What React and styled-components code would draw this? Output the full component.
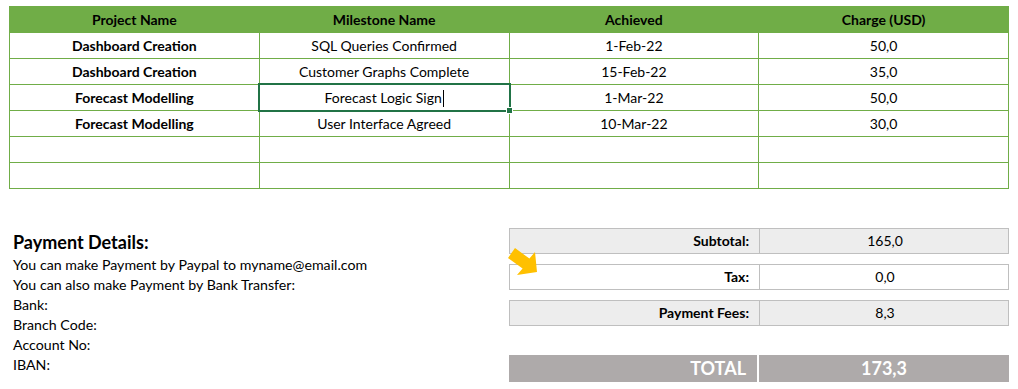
import React from "react";
import styled, { createGlobalStyle } from "styled-components";

const GlobalStyle = createGlobalStyle`
  body {
    margin: 0;
    background: #ffffff;
    font-family: Lato, "Liberation Sans", sans-serif;
    color: #000000;
  }
`;

const Sheet = styled.div`
  width: 1018px;
  height: 389px;
  padding: 6px 0 0 9px;
  box-sizing: border-box;
  overflow: hidden;
  position: relative;
`;

const Grid = styled.table`
  border-collapse: collapse;
  table-layout: fixed;
  width: 1000px;
  font-size: 14px;
`;

const HeadCell = styled.th`
  background: #70ad47;
  border: 1px solid #70ad47;
  height: 25px;
  padding: 0;
  font-weight: 700;
  text-align: center;
`;

const Cell = styled.td`
  border: 1px solid #70ad47;
  height: 25px;
  padding: 0;
  text-align: center;
  font-weight: ${(p) => (p.bold ? 700 : 400)};
  position: relative;
`;

const ActiveFrame = styled.span`
  position: absolute;
  left: -2px;
  top: -2px;
  right: -2px;
  bottom: -2px;
  border: 2px solid #217346;
  pointer-events: none;

  &::after {
    content: "";
    position: absolute;
    right: -4px;
    bottom: -4px;
    width: 5px;
    height: 5px;
    background: #217346;
    border: 1px solid #ffffff;
  }
`;

const Caret = styled.span`
  display: inline-block;
  width: 1px;
  height: 17px;
  background: #000000;
  vertical-align: -4px;
  margin-left: 1px;
`;

const Bottom = styled.div`
  display: flex;
  margin-top: 39px;
`;

const Payment = styled.div`
  width: 500px;
  padding: 2px 0 0 4px;
  box-sizing: border-box;
`;

const PaymentTitle = styled.div`
  font-size: 18px;
  font-weight: 700;
  line-height: 24px;
  margin-bottom: 1px;
`;

const PaymentLine = styled.div`
  font-size: 14.2px;
  line-height: 20px;
`;

const Summary = styled.div`
  width: 500px;
  display: flex;
  flex-direction: column;
  gap: 10px;
`;

const SummaryRow = styled.div`
  display: grid;
  grid-template-columns: 250px 250px;
  height: 26px;
  box-sizing: border-box;
  border: 1px solid #bfbfbf;
  background: ${(p) => (p.shaded ? "#ededed" : "#ffffff")};
  font-size: 14px;
`;

const SummaryLabel = styled.div`
  font-weight: 700;
  text-align: right;
  padding-right: 10px;
  line-height: 24px;
  border-right: 1px solid #bfbfbf;
`;

const SummaryValue = styled.div`
  text-align: center;
  line-height: 24px;
`;

const TotalRow = styled.div`
  display: grid;
  grid-template-columns: 250px 250px;
  height: 27px;
  margin-top: 19px;
  background: #aeaaaa;
  color: #ffffff;
  font-weight: 700;
  font-size: 18px;
  line-height: 27px;
`;

const TotalLabel = styled.div`
  text-align: right;
  padding-right: 11px;
  border-right: 2px solid #ffffff;
`;

const TotalValue = styled.div`
  text-align: center;
`;

const Pointer = styled.svg`
  position: absolute;
  left: 505px;
  top: 246px;
`;

const milestones = [
  { project: "Dashboard Creation", name: "SQL Queries Confirmed", date: "1-Feb-22", charge: "50,0" },
  { project: "Dashboard Creation", name: "Customer Graphs Complete", date: "15-Feb-22", charge: "35,0" },
  { project: "Forecast Modelling", name: "Forecast Logic Sign", date: "1-Mar-22", charge: "50,0", editing: true },
  { project: "Forecast Modelling", name: "User Interface Agreed", date: "10-Mar-22", charge: "30,0" },
  { project: "", name: "", date: "", charge: "" },
  { project: "", name: "", date: "", charge: "" },
];

const paymentLines = [
  "You can make Payment by Paypal to myname@email.com",
  "You can also make Payment by Bank Transfer:",
  "Bank:",
  "Branch Code:",
  "Account No:",
  "IBAN:",
];

const totals = [
  { label: "Subtotal:", value: "165,0", shaded: true },
  { label: "Tax:", value: "0,0" },
  { label: "Payment Fees:", value: "8,3", shaded: true },
];

export default function App() {
  return (
    <>
      <GlobalStyle />
      <Sheet>
        <Grid>
          <thead>
            <tr>
              <HeadCell>Project Name</HeadCell>
              <HeadCell>Milestone Name</HeadCell>
              <HeadCell>Achieved</HeadCell>
              <HeadCell>Charge (USD)</HeadCell>
            </tr>
          </thead>
          <tbody>
            {milestones.map((m, i) => (
              <tr key={i}>
                <Cell bold>{m.project}</Cell>
                <Cell>
                  {m.name}
                  {m.editing && <Caret />}
                  {m.editing && <ActiveFrame />}
                </Cell>
                <Cell>{m.date}</Cell>
                <Cell>{m.charge}</Cell>
              </tr>
            ))}
          </tbody>
        </Grid>

        <Bottom>
          <Payment>
            <PaymentTitle>Payment Details:</PaymentTitle>
            {paymentLines.map((line) => (
              <PaymentLine key={line}>{line}</PaymentLine>
            ))}
          </Payment>
          <Summary>
            {totals.map((t) => (
              <SummaryRow key={t.label} shaded={t.shaded}>
                <SummaryLabel>{t.label}</SummaryLabel>
                <SummaryValue>{t.value}</SummaryValue>
              </SummaryRow>
            ))}
            <TotalRow>
              <TotalLabel>TOTAL</TotalLabel>
              <TotalValue>173,3</TotalValue>
            </TotalRow>
          </Summary>
        </Bottom>

        <Pointer width="36" height="32" viewBox="0 0 36 32">
          <polygon
            points="10,2 24.4,12.6 30,6 32,26 12,29 17.6,22.4 3,12"
            fill="#ffc000"
          />
        </Pointer>
      </Sheet>
    </>
  );
}
